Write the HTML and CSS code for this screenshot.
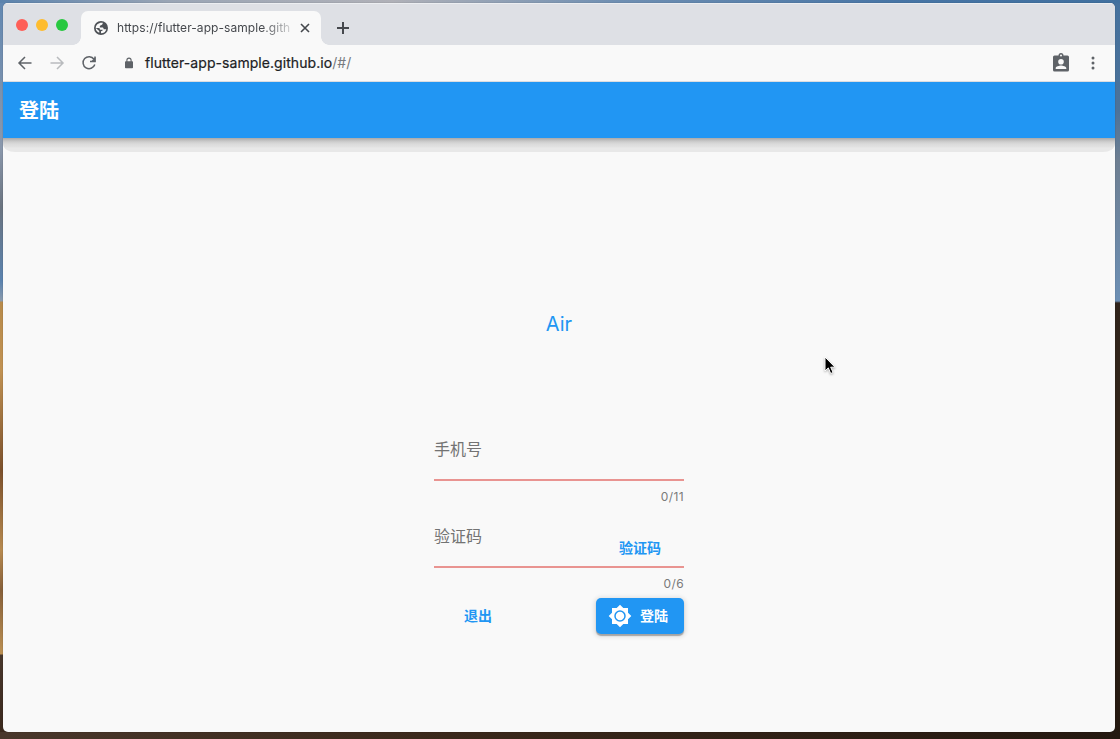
FILE: index.html
```html
<!DOCTYPE html>
<html lang="zh-CN">
<head>
<meta charset="utf-8">
<title>登陆</title>
<link rel="stylesheet" href="styles.css">
</head>
<body>
<div class="window">
  <div class="tabstrip">
    <div class="lights"><i class="red"></i><i class="yellow"></i><i class="green"></i></div>
    <div class="tab">
      <svg class="globe" viewBox="0 0 24 24"><circle cx="12" cy="12" r="12" fill="#4d5156"/><path d="M15 3c0 3-1 4-4 4.500-1 .2-1 2-1 3.500h4c2 0 2.500 1 2.500 3h4.500c-.5 4-4 7-9 7v-3.500c2 0 3-1 3-2.500h-3c-2 0-2.500-1-2.500-3H3c0-5 4-9.500 12-9z M3 12l6 5v3c-3.500-1-6-4-6-8z" fill="#f9f9f9"/></svg>
      <span class="tab-title">https://flutter-app-sample.gith</span>
      <svg class="close" viewBox="0 0 10 10"><path d="M1 1l8 8M9 1L1 9"/></svg>
    </div>
    <svg class="plus" viewBox="0 0 12 12"><path d="M6 0v12M0 6h12"/></svg>
  </div>
  <div class="toolbar">
    <svg class="nav" viewBox="0 0 16 16"><path d="M14.500 8H2M8 2L2 8l6 6"/></svg>
    <svg class="nav forward" viewBox="0 0 16 16"><path d="M1.500 8H14M8 2l6 6-6 6"/></svg>
    <svg class="nav" viewBox="0 0 16 16"><path d="M13 4.200A6 6 0 1 0 13.800 9.500M14 1.500v5H9"/><path d="M14.500 2v5h-5z" fill="#5f6368" stroke="none"/></svg>
    <svg class="lock" viewBox="0 0 10 12"><rect x="1" y="4.300" width="8" height="7" rx=".8" fill="#5f6368"/><path d="M2.900 5V3.200a2.100 2.100 0 0 1 4.200 0V5" fill="none" stroke="#5f6368" stroke-width="1.100"/></svg>
    <span class="url"><span class="host">flutter-app-sample.github.io</span><span class="path">/#/</span></span>
    <svg class="badge" viewBox="0 0 16 19"><path fill-rule="evenodd" d="M1.500 2.500h4a2.500 2.500 0 0 1 5 0h4Q16 2.500 16 4v13q0 1.500-1.500 1.500h-13Q0 18.500 0 17V4q0-1.500 1.500-1.500zM8 1.500a1 1 0 1 0 0 2 1 1 0 0 0 0-2zM8 6a2.800 2.800 0 1 0 0 5.600A2.800 2.800 0 0 0 8 6zM2.700 16h10.600v-.8c0-1.800-3.600-2.700-5.300-2.700s-5.300.9-5.300 2.700z"/></svg>
    <svg class="dots" viewBox="0 0 4 14"><circle cx="2" cy="2" r="1.500"/><circle cx="2" cy="7" r="1.500"/><circle cx="2" cy="12" r="1.500"/></svg>
  </div>
  <header class="appbar">登陆</header>
  <div class="appbar-shadow"></div>
  <main class="page">
    <h1 class="title">Air</h1>
    <form class="form">
      <div class="field"><label>手机号</label></div>
      <div class="counter">0/11</div>
      <div class="field code"><label>验证码</label><span class="send">验证码</span></div>
      <div class="counter">0/6</div>
      <div class="actions">
        <span class="exit">退出</span>
        <span class="login"><svg viewBox="0 0 24 24"><path d="M20 8.690V4h-4.690L12 .69 8.690 4H4v4.690L.69 12 4 15.310V20h4.690L12 23.310 15.310 20H20v-4.690L23.310 12 20 8.690z"/><circle cx="12" cy="12" r="5"/></svg><span class="login-text">登陆</span></span>
      </div>
    </form>
  </main>
</div>
<svg class="cursor" viewBox="0 0 12 19"><path d="M1 1v14l3.300-3.100 2.400 5.600 2.400-1-2.400-5.300H11z" fill="#000" stroke="#fff" stroke-width="1"/></svg>
</body>
</html>
```
FILE: styles.css
```css
* { box-sizing: border-box; }
body {
  margin: 0;
  width: 1120px;
  height: 739px;
  padding: 3px 5px 7px 3px;
  overflow: hidden;
  font-family: Inter, "Noto Sans CJK SC", sans-serif;
  background:
    linear-gradient(90deg, #5b83ad, #9aa5b5 15%, #b0b1b8 35%, #6f8fb2 55%, #4775a5 80%, #40709f) 0 0 / 100% 3px no-repeat,
    linear-gradient(90deg, #49372b, #3a281b 40%, #241810) 0 100% / 100% 7px no-repeat,
    linear-gradient(#6288b2, #8a98ac 20%, #6b7480 28%, #5b83af 38%, #8b9bad 301px, #b88b4b 302px, #c19253 370px, #7c512c 470px, #b78a50 550px, #87603a 590px, #bb9053 654px, #48372c 655px, #3a281c) 0 0 / 10px 100% no-repeat,
    linear-gradient(#44719e, #4c7299 110px, #6e7f92 160px, #6c8fb4 301px, #30241b 303px, #34271b 500px, #241810) 100% 0 / 10px 100% no-repeat;
}
.window {
  width: 1112px;
  height: 729px;
  border-radius: 5px;
  overflow: hidden;
  background: #f9f9f9;
  box-shadow: 0 0 1px rgba(0, 0, 0, .5);
}
.tabstrip {
  display: flex;
  height: 42px;
  background: #dee0e5;
  border-top: 1px solid #eceef1;
}
.lights { display: flex; gap: 8px; padding: 15px 0 0 13px; width: 78px; }
.lights i { width: 12px; height: 12px; border-radius: 50%; }
.red { background: #fe5f57; }
.yellow { background: #febc2e; }
.green { background: #28c840; }
.tab {
  position: relative;
  display: flex;
  align-items: center;
  width: 240px;
  height: 34px;
  margin-top: 7px;
  padding-left: 13px;
  border-radius: 7px 7px 0 0;
  background: #f9f9f9;
}
.tab::before, .tab::after {
  content: "";
  position: absolute;
  bottom: 0;
  width: 8px;
  height: 8px;
}
.tab::before { left: -8px; background: radial-gradient(circle at 0 0, #dee0e5 7.500px, #f9f9f9 8px); }
.tab::after { right: -8px; background: radial-gradient(circle at 100% 0, #dee0e5 7.500px, #f9f9f9 8px); }
.globe { width: 14px; height: 14px; }
.tab-title {
  width: 174px;
  margin-left: 9px;
  padding-bottom: 2px;
  overflow: hidden;
  white-space: nowrap;
  font-size: 12px;
  letter-spacing: .06px;
  color: #45484d;
  -webkit-mask-image: linear-gradient(90deg, #000 145px, rgba(0, 0, 0, .2) 174px);
  mask-image: linear-gradient(90deg, #000 145px, rgba(0, 0, 0, .2) 174px);
}
.close { width: 10px; height: 10px; margin-left: 9px; }
.close path, .plus path { fill: none; stroke: #45484d; stroke-width: 1.600; }
.plus { width: 12px; height: 12px; margin: 18px 0 0 16px; }
.plus path { stroke-width: 2; }
.toolbar {
  display: flex;
  align-items: center;
  height: 37px;
  padding: 0 20px 0 14px;
  border-bottom: 1px solid #dcdde0;
}
.nav { width: 16px; height: 16px; margin-right: 16px; fill: none; stroke: #5f6368; stroke-width: 1.500; }
.forward { stroke: #b9bbbe; }
.lock { width: 10px; height: 12px; margin-left: 11px; }
.url { margin-left: 11px; padding-bottom: 2px; font-size: 14px; letter-spacing: .06px; white-space: nowrap; }
.host { color: #202124; -webkit-text-stroke: .2px #202124; }
.path { color: #777a7e; }
.badge { width: 16px; height: 19px; margin: 0 0 2px auto; fill: #5f6368; }
.dots { width: 4px; height: 14px; margin-left: 22px; fill: #5f6368; }
.appbar {
  height: 56px;
  padding-left: 16px;
  background: #2196f3;
  color: #fff;
  font-size: 20px;
  font-weight: 700;
  line-height: 58px;
}
.appbar-shadow {
  height: 14px;
  border-radius: 0 0 12px 12px / 0 0 8px 8px;
  background: linear-gradient(#a9a9a9, #bdbdbd 2px, #cfcfcf 4px, #dadada 6px, #e2e2e2 9px, #e8e8e8 10px, #e8e8e8);
}
.page { display: flex; flex-direction: column; align-items: center; }
.title {
  margin: 160px 0 0;
  height: 24px;
  font-size: 20px;
  font-weight: 400;
  line-height: 24px;
  color: #2196f3;
}
.form { width: 250px; margin-top: 98px; }
.field {
  position: relative;
  display: flex;
  justify-content: space-between;
  height: 47px;
  border-bottom: 2px solid #e99491;
  color: #737373;
  font-size: 16px;
  line-height: 30px;
}
.counter {
  height: 40px;
  padding-top: 8px;
  text-align: right;
  font-size: 12px;
  line-height: 16px;
  letter-spacing: .4px;
  color: #7a7a7a;
}
.send { padding: 12px 23px 0 0; color: #2196f3; font-size: 14px; font-weight: 700; line-height: 30px; }
.code + .counter { height: 30px; }
.actions { display: flex; justify-content: space-between; align-items: center; }
.exit { margin-left: 30px; padding-bottom: 2px; color: #2196f3; font-size: 14px; font-weight: 700; }
.login {
  display: flex;
  align-items: center;
  gap: 8px;
  width: 88px;
  height: 36px;
  padding-left: 12px;
  border-radius: 5px;
  background: #2196f3;
  box-shadow: 0 2px 1px rgba(0, 0, 0, .28), 0 1px 4px 2px rgba(0, 0, 0, .1);
  color: #fff;
  font-size: 14px;
  font-weight: 700;
}
.login-text { padding-bottom: 2px; }
.login svg { width: 24px; height: 24px; fill: #fff; }
.login circle { fill: none; stroke: #2196f3; stroke-width: 1.500; }
.cursor { position: absolute; left: 824px; top: 356px; width: 12px; height: 19px; filter: drop-shadow(0 1px 1px rgba(0, 0, 0, .3)); }
```
